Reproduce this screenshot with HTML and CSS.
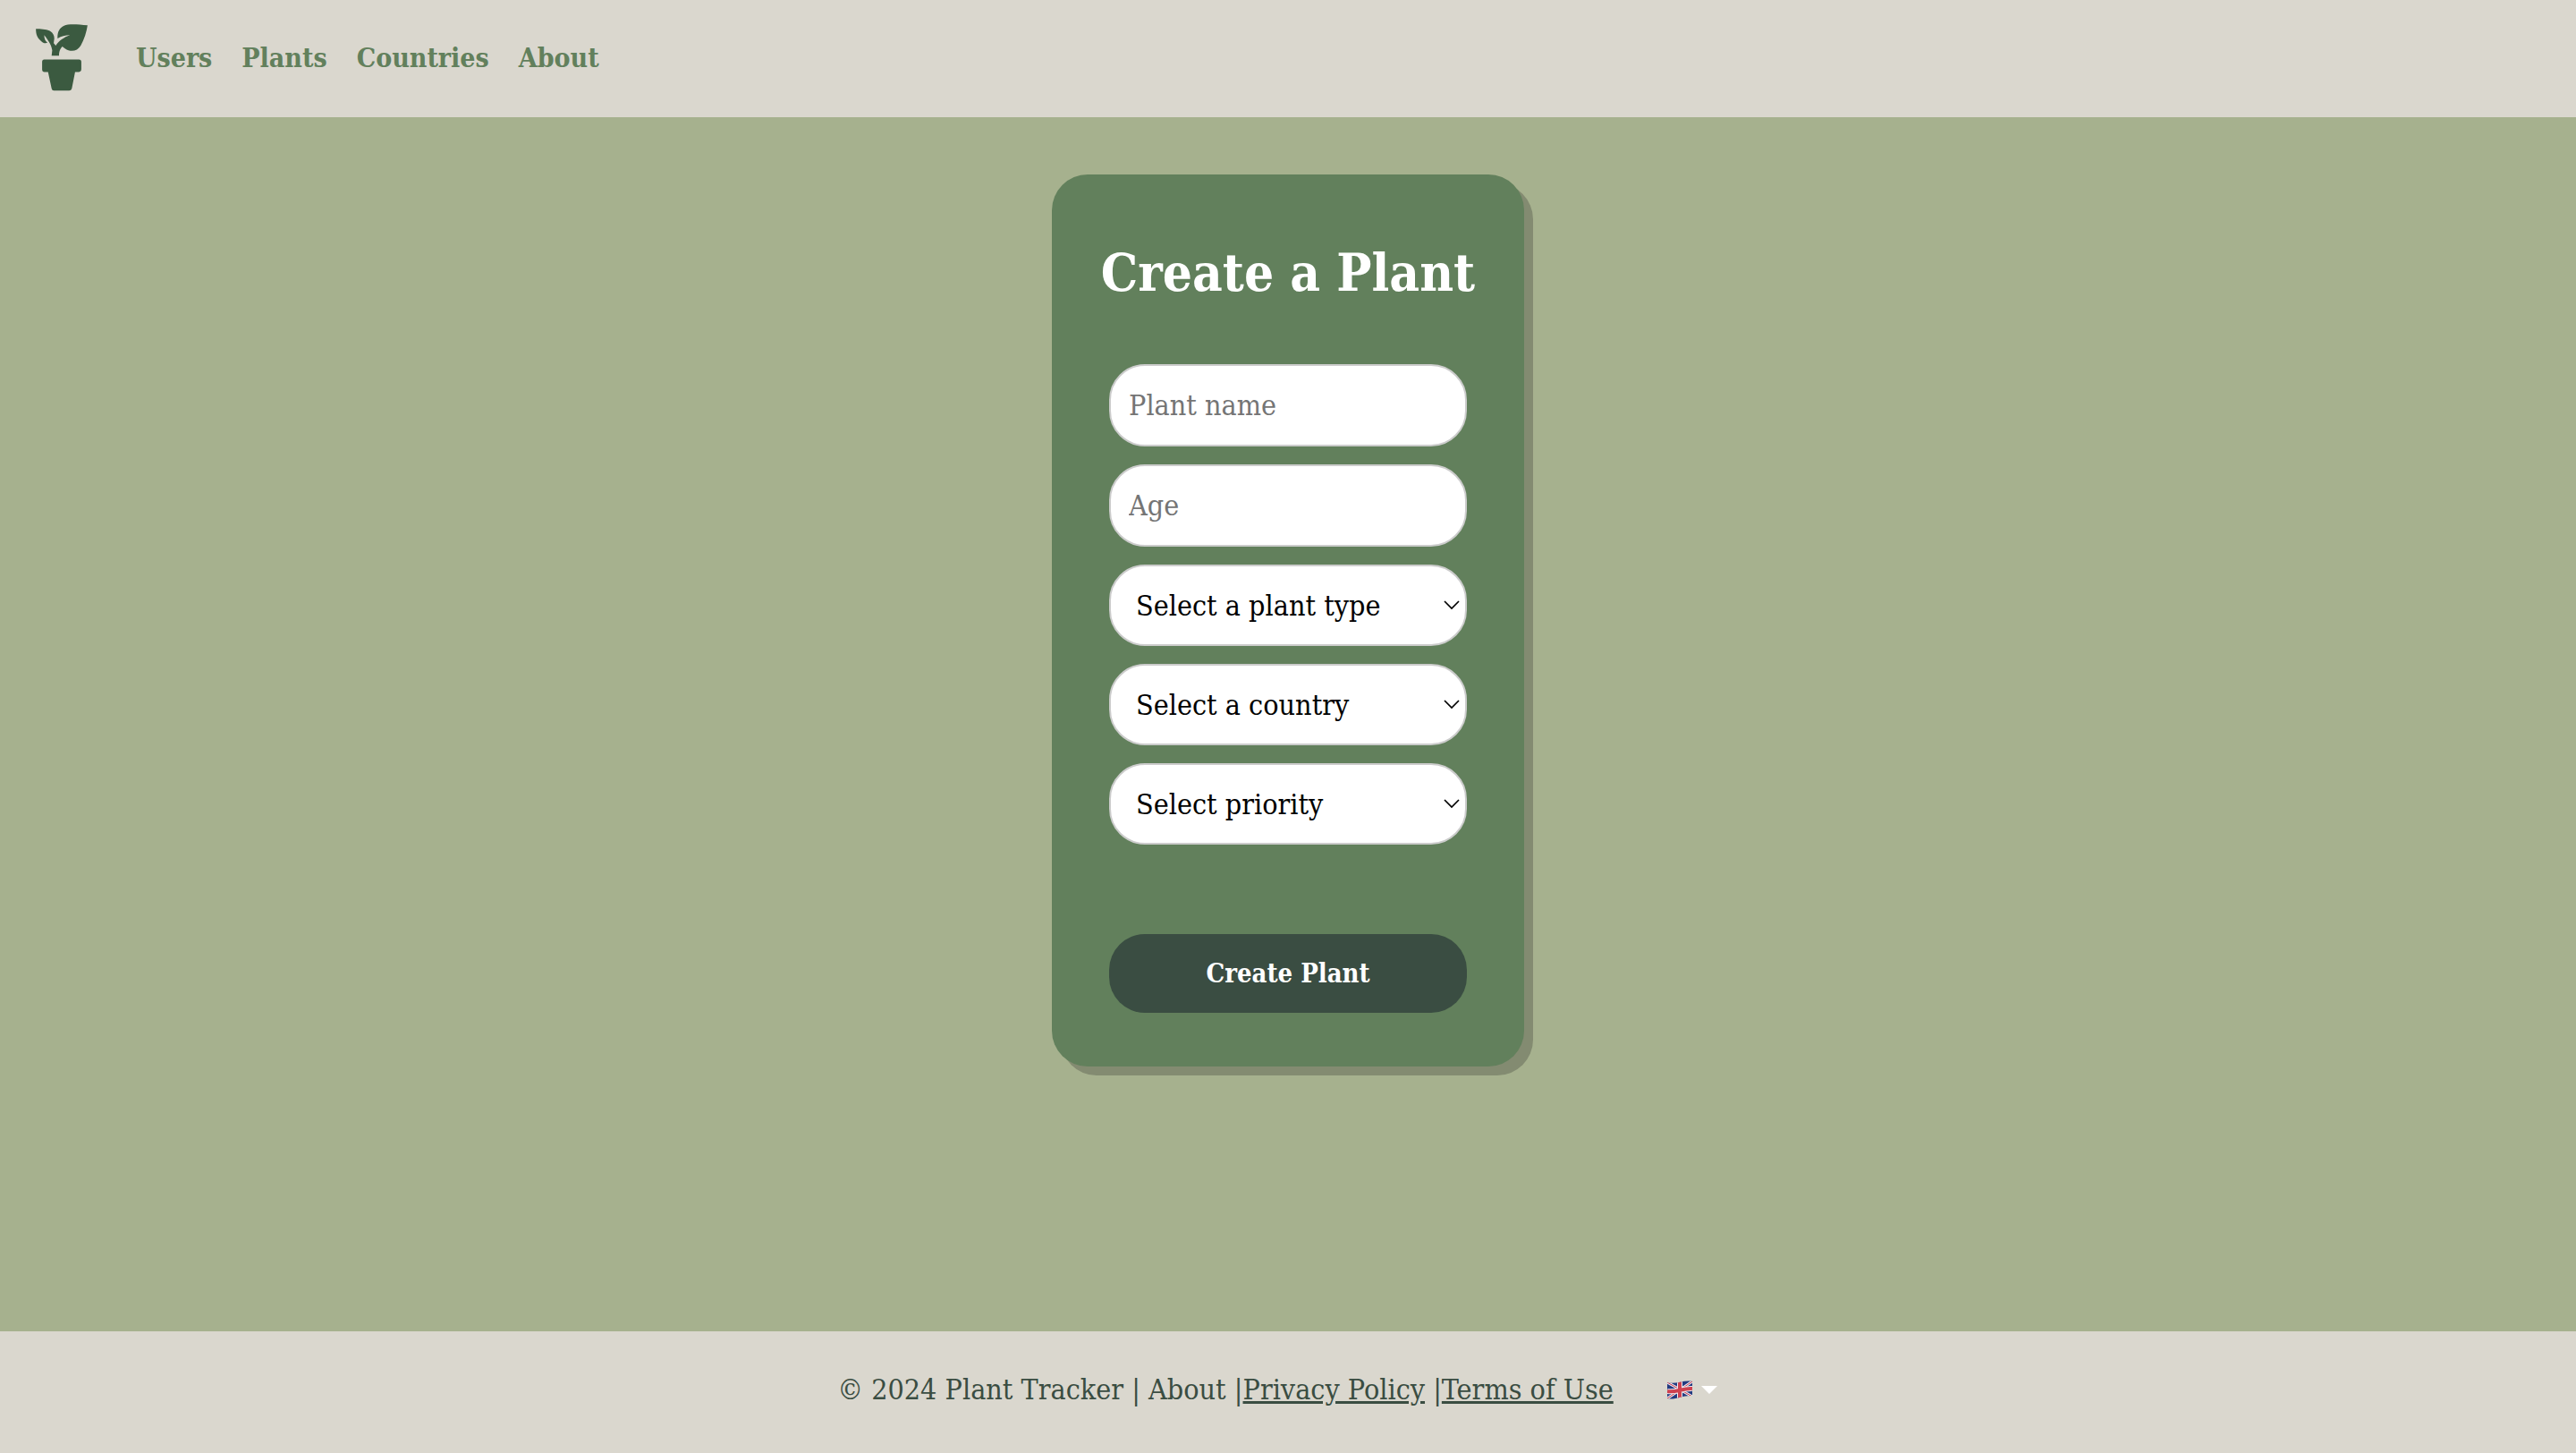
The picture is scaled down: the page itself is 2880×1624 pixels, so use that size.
FILE: index.html
```html
<!DOCTYPE html>
<html lang="en">
<head>
  <meta charset="utf-8">
  <meta name="viewport" content="width=device-width, initial-scale=1">
  <title>Create a Plant</title>
  <link rel="stylesheet" href="styles.css">
</head>
<body>
  <header class="header">
    <a class="logo" href="#" aria-label="Plant Tracker home">
      <svg class="logo-icon" viewBox="0 0 174 226" aria-hidden="true">
        <path d="M0 16C16 15 39 18 49 24C60 31 64 43 61 56L60 64L67 72C77 57 94 44 115 37C98 37 86 41 73 48C72 28 78 13 95 5C108 -1 138 0 174 4C171 25 163 52 151 72C139 92 117 95 98 82L89 75C81 84 78 91 78 106H53L55 88C53 74 45 58 28 37C28 49 32 58 39 62C34 66 26 64 21 60C5 48 0 36 0 16Z"/>
        <path d="M28 119H145Q153 119 153 127V151Q153 161 145 161H132L121 217Q119 224 112 224H61Q54 224 53 217L41 161H29Q21 161 21 152V127Q21 119 28 119Z"/>
      </svg>
    </a>
    <nav class="nav" aria-label="Main">
      <a href="#">Users</a>
      <a href="#">Plants</a>
      <a href="#">Countries</a>
      <a href="#">About</a>
    </nav>
  </header>

  <main class="main">
    <form class="card">
      <h1 class="title">Create a Plant</h1>
      <div class="fields">
        <input class="field" type="text" placeholder="Plant name" aria-label="Plant name">
        <input class="field" type="text" inputmode="numeric" placeholder="Age" aria-label="Age">
        <select class="field select" aria-label="Plant type"><option>Select a plant type</option></select>
        <select class="field select" aria-label="Country"><option>Select a country</option></select>
        <select class="field select" aria-label="Priority"><option>Select priority</option></select>
      </div>
      <button class="submit" type="submit">Create Plant</button>
    </form>
  </main>

  <footer class="footer">
    <p class="legal">© 2024 Plant Tracker | About |<a href="#">Privacy Policy</a> |<a href="#">Terms of Use</a></p>
    <button class="language" type="button" aria-label="Language: English">
      <svg class="flag" viewBox="0 0 28 21" aria-hidden="true">
        <clipPath id="flag-shape"><path d="M0 2C9 5 18 -1 28 1V17C18 16 9 22 0 20Z"/></clipPath>
        <g clip-path="url(#flag-shape)">
          <path fill="#233a80" d="M0 0H28V21H0Z"/>
          <path stroke="#eceaf0" stroke-width="3" d="M0 2L28 18M0 20L28 1"/>
          <path stroke="#c8394c" stroke-width="1" d="M0 2L28 18M0 20L28 1"/>
          <path fill="none" stroke="#eceaf0" stroke-width="6" d="M14 0V21M0 12C9 14 18 8 28 9"/>
          <path fill="none" stroke="#ce4150" stroke-width="4" d="M14 0V21M0 12C9 14 18 8 28 9"/>
        </g>
      </svg>
      <svg class="caret" viewBox="0 0 18 9" aria-hidden="true"><path d="M0 0H18L9 9Z"/></svg>
    </button>
  </footer>
</body>
</html>
```
FILE: styles.css
```css
:root {
  --sand: #dad7ce;
  --sage: #a6b18e;
  --fern: #62805c;
  --pine: #3b5a40;
  --forest: #3a4d42;
}

* {
  box-sizing: border-box;
}

body {
  display: flex;
  flex-direction: column;
  min-height: 100vh;
  margin: 0;
  background: var(--sage);
  font-family: "Roboto Slab", "DejaVu Serif Condensed", "DejaVu Serif", serif;
  font-size: 32px;
  line-height: 40px;
}

.header {
  display: flex;
  align-items: center;
  gap: 54px;
  padding: 27px 40px 29px;
  background: var(--sand);
}

.logo-icon {
  display: block;
  width: 58px;
  height: 75px;
  fill: var(--pine);
}

.nav {
  display: flex;
  gap: 33px;
  font-size: 30px;
  font-weight: 700;
}

.nav a {
  color: var(--fern);
  text-decoration: none;
}

.main {
  display: flex;
  flex: 1;
  align-items: flex-start;
  justify-content: center;
  padding: 64px;
}

.card {
  display: flex;
  flex-direction: column;
  width: 528px;
  padding: 68px 48px 60px;
  border-radius: 40px;
  background: var(--fern);
  box-shadow: 10px 10px 0 #838b71;
}

.title {
  margin: 0 0 60px;
  color: #fff;
  font-size: 58px;
  line-height: 84px;
  text-align: center;
  white-space: nowrap;
}

.fields {
  display: grid;
  gap: 20px;
  padding: 0 16px;
}

.field {
  width: 100%;
  height: 92px;
  padding: 0 20px;
  border: 2px solid #ccc;
  border-radius: 40px;
  background: #fff;
  color: #000;
  font: inherit;
}

.field::placeholder {
  color: #757575;
  opacity: 1;
}

.select {
  height: 91px;
  padding: 0 28px;
  appearance: none;
  background: #fff url("data:image/svg+xml,%3Csvg xmlns='http://www.w3.org/2000/svg' viewBox='0 0 18 11'%3E%3Cpath d='M1 1l8 8 8-8' fill='none' stroke='%23000' stroke-width='1.7'/%3E%3C/svg%3E") no-repeat right 6px center / 18px 11px;
}

.submit {
  height: 88px;
  margin: 100px 16px 0;
  border: 0;
  border-radius: 40px;
  background: var(--forest);
  color: #fff;
  font: inherit;
  font-size: 29px;
  font-weight: 700;
}

.footer {
  display: flex;
  align-items: center;
  justify-content: center;
  gap: 60px;
  padding: 45px 24px 51px;
  background: var(--sand);
  color: var(--forest);
}

.legal {
  margin: 0;
}

.legal a {
  color: inherit;
  text-decoration-thickness: 3px;
}

.language {
  display: flex;
  align-items: center;
  gap: 10px;
  padding: 0 24px 0 0;
  border: 0;
  background: none;
}

.flag {
  width: 28px;
  height: 21px;
}

.caret {
  width: 18px;
  height: 9px;
  fill: #fff;
}
```
